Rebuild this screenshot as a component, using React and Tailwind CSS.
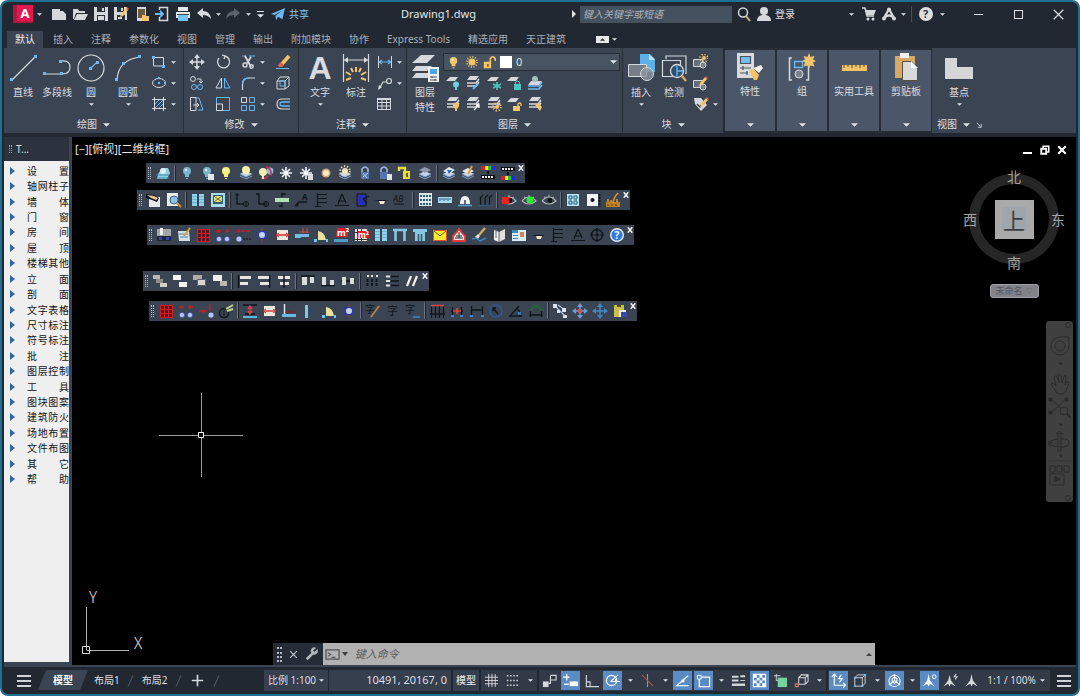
import { useState } from 'react'

const LIGHT = '#d5d8dc'
const BLUE = '#6cb8f0'
const GOLD = '#f4c46a'
const INK = '#10151b'

const L = ({ d, c = LIGHT, w = 1, f = 'none', dash }) => <path d={d} stroke={c} strokeWidth={w} fill={f} strokeDasharray={dash} />
const F = ({ d, c = LIGHT }) => <path d={d} fill={c} />
const Svg = ({ size = 16, box = 16, children }) => (
  <svg width={size} height={size} viewBox={`0 0 ${box} ${box}`} className="shrink-0" aria-hidden="true">
    {children}
  </svg>
)

const stack = (c = LIGHT) => (
  <>
    <F d="M5 1h9l-3 4H2z" c={c} />
    <L d="M2 8h9l3-4M2 11h9l3-4" c={c} w={1.6} />
  </>
)
const sheet = <F d="M5 2h8l-3 4H1z" />
const pencil = <><F d="M8 8l5-6 2 2-5 6-3 1z" c={GOLD} /><F d="M13 2l1-1 2 2-1 1z" c="#e5533d" /></>
const bulb = (c) => (
  <>
    <circle cx="8" cy="6" r="4" fill={c} />
    <F d="M6 9h4v3H6zM7 13h2v1H7z" c={c} />
    <circle cx="7" cy="5" r="1.3" fill="#fff" opacity=".7" />
  </>
)
const bulbSmall = (c) => <><circle cx="11" cy="9.5" r="3" fill={c} /><F d="M10 12h2v3h-2z" c={c} /></>
const sun = (x, y, r, c = GOLD) => (
  <>
    <circle cx={x} cy={y} r={r} fill={c} />
    <circle cx={x} cy={y} r={r + 1.8} fill="none" stroke={c} strokeWidth="2" strokeDasharray="1.2 1.8" />
  </>
)
const flake = (c) => <L d="M8 2v12M2 8h12M4 4l8 8M12 4l-8 8" c={c} w={1.6} />
const piles = (
  <>
    <F d="M2 9l6-3 6 3-6 3z" c="#c8d4e6" />
    <L d="M2 11l6 3 6-3M2 9l6 3 6-3" c="#7fa0c8" />
  </>
)
const twoBolts = (
  <>
    <circle cx="4" cy="12" r="2.6" fill="#b4c4ff" stroke="#3040a0" strokeWidth=".6" />
    <circle cx="12" cy="12" r="2.6" fill="#b4c4ff" stroke="#3040a0" strokeWidth=".6" />
  </>
)
const eye = (
  <>
    <L d="M1 9q7-8 14 0q-7 6-14 0M3 5l2 1M8 3v2M13 5l-2 1" c="#a9b4ac" w={1.2} />
    <circle cx="9" cy="8.5" r="2.4" fill={INK} />
  </>
)
const redGrid = <><F d="M2 2h12v12H2z" c="#5c1520" /><L d="M2 2.5h13M2 6.5h13M2 10.5h13M2 14.5h13M2.5 2v13M6.5 2v13M10.5 2v13M14.5 2v13" c="#d01c22" w={1.2} /></>
const columns = <><F d="M2 2h5v12H2zM9 2h5v12H9z" c="#8fd0ea" /><L d="M2 4.5h5M2 7.5h5M2 10.5h5M9 4.5h5M9 7.5h5M9 10.5h5" c="#6cb4d4" /></>
const fan = <><F d="M5 13V4q7 1 8 9z" c="#eadf9c" /><F d="M1 12h3v3H1zM13 12h2v3h-2z" c="#67c8f0" /></>
const pin = <><L d="M8 1v14" c="#8a3a50" w={1.2} /><F d="M3 4h10v8H3z" c="#303c98" /><circle cx="8" cy="8" r="3" fill="#c4d4ff" /></>
const paper = <><F d="M3 3h11v10H3z" c="#efe8dc" /><L d="M2 8h13" c="#d03030" w={1.4} /><L d="M5 6l-3 2 3 2M12 6l3 2-3 2" c="#d03030" /></>
const shelf = <L d="M3.5 1v14M3 2.5h10M3 6.5h10M3 10.5h10M1 14.5h6" c={INK} w={1.2} />
const basin = <><F d="M1 8h14l-3 1-1 3H7L6 9z" c={INK} /><F d="M6 9h6l-1 3H7z" c="#f3e6d0" /></>
const compass = <L d="M1 13.5h14M8 2l-4 10M8 2l4 9M4 9h8" c={INK} w={1.2} />
const cross4 = (c) => <><L d="M8 2v12M2 8h12" c={c} w={1.5} /><F d="M8 0l3 4H5zM8 16l3-4H5zM0 8l4-3v6zM16 8l-4-3v6z" c={c} /></>

const icons = {
  // 图层工具条
  layerMgr: <><F d="M3 9l4-6h6l2 5-3 6H2z" c="#8fd0e6" /><circle cx="8" cy="6" r="3" fill="#dfeef5" /><L d="M1 10h13M2 13h12" c="#4284a8" /></>,
  bulbOff: bulb('#78b4cc'),
  bulbOffPage: <>{bulb('#78b4cc')}<F d="M9 9h6v6H9z" c="#e4e6ea" /></>,
  bulbOn: bulb('#f8f07c'),
  bulbLayers: <>{piles}<circle cx="8" cy="5" r="4" fill="#fbf3a8" /></>,
  bulbSwap: <><circle cx="5" cy="7" r="4" fill="#f5efb0" /><circle cx="12" cy="6" r="3.4" fill="#8cc1d8" /><L d="M8 2q6 1 5 9M3 13q4 2 7-2" c="#c8305c" w={1.6} /><F d="M4 10h2v4H4z" c="#f5efb0" /></>,
  flake: flake('#f4f6f8'),
  flakePage: <>{flake('#f4f6f8')}<F d="M10 9h5v6h-5z" c="#d8dce2" /></>,
  sunDot: <><circle cx="8" cy="8" r="4.5" fill="#c9a27c" /><circle cx="8" cy="8" r="3" fill="#fde9c4" /></>,
  sunLayers: <>{piles}{sun(8, 6, 3, '#f2e3ba')}</>,
  lock: <><L d="M5 7V4q3-4 6 0v3" c="#9fb6e0" w={1.6} /><F d="M4 7h8v7H4z" c="#5575b0" /><L d="M6 8l4 5M6 12l5-4" c="#b8cdf5" /></>,
  lockPage: <><L d="M4 7V4q3-4 6 0v3" c="#9fb6e0" w={1.6} /><F d="M3 7h8v7H3z" c="#5575b0" /><F d="M10 9h5v6h-5z" c="#dfe3ea" /></>,
  unlock: <><L d="M2 6V3h6v5" c="#e8dc40" w={2.4} /><F d="M6 6h7v8H6z" c="#e8dc40" /><F d="M9 8h2v4H9z" c="#6a6420" /></>,
  stackGrey: <>{piles}<F d="M2 5l6-3 6 3-6 3z" c="#9198ac" /></>,
  stackBlue: <>{piles}<F d="M2 6l6-4 6 3-6 4z" c="#dce8f6" /><F d="M6 5h5l-3 4z" c="#2d6aa8" /></>,
  stackPen: <>{piles}<F d="M2 6l6-3 6 3-6 3z" c="#e4e8f0" /><L d="M12 1L8 9" c="#e8a030" w={2} /></>,
  rainbowTop: <><F d="M1 1h5v4H1z" c="#e81818" /><F d="M5 1h3v4H5z" c="#f8f020" /><F d="M8 1h4v4H8z" c="#20c830" /><F d="M11 1h4v4h-4z" c="#2028e0" /><F d="M1 10h14v4H1zM7 6h2v3H7z" c="#0a0c10" /><L d="M2 12h12" c="#f0f0f0" w={2} dash="2 1" /></>,
  rainbowBottom: <><F d="M1 2h14v4H1zM7 7h2v3H7z" c="#0a0c10" /><L d="M2 4h12" c="#f0f0f0" w={2} dash="2 1" /><F d="M1 11h5v4H1z" c="#e81818" /><F d="M5 11h3v4H5z" c="#f8f020" /><F d="M8 11h4v4H8z" c="#20c830" /><F d="M11 11h4v4h-4z" c="#2028e0" /></>,
  // 常用
  hand: <><F d="M3 5h11v10H3z" c="#e8ebee" /><F d="M0 2l8 1 5 3-2 4-5-2-6-2z" c={INK} /><F d="M1 3l7 1 4 2-2 2-5-2z" c="#e8c49c" /></>,
  findPage: <><F d="M1 1h11v13H1z" c="#e8edf2" /><circle cx="8" cy="8" r="4" fill="#8fc0e4" stroke="#44688c" /><L d="M11 11l4 4" c="#d88a30" w={2} /></>,
  columns,
  frame: <><F d="M1 1h14v14H1z" c="#a6dcec" /><F d="M3 3h10v9H3z" c="#325c70" /><F d="M4 4h8v6H4z" c="#e2de7c" /><L d="M4 4l8 6M12 4l-8 6" c="#6b7440" /></>,
  axisA: <><L d="M3 1v11h7" c={INK} w={1.3} /><circle cx="12" cy="12" r="2.5" fill="none" stroke={INK} /><L d="M12 9v6M1 3h4" c={INK} /></>,
  axisB: <><L d="M2 2h3v10h6" c={INK} w={1.3} /><circle cx="12" cy="12" r="2.5" fill="none" stroke={INK} /><L d="M12 9v6" c={INK} /></>,
  wallEdit: <><F d="M1 6h14v4H1z" c="#b4e0b8" /><L d="M8 1v4M8 11v4M5 14h3M8 2h4" c={INK} w={1.3} /></>,
  noteA: <><L d="M1 14l4-4h8" c={INK} w={1.4} /><circle cx="3" cy="13" r="1.5" fill={INK} /><text x="8" y="8" fontSize="8" fontWeight="bold" fill={INK}>A</text></>,
  shelf,
  compass,
  door: <><L d="M3 2h9v12H3z" c={INK} /><F d="M4 3h7v10H4z" c="#2a2fb8" /><L d="M9 7l6-3M9 7l4 4" c={INK} w={1.3} /></>,
  basin,
  textAB: <><text x="0" y="10" fontSize="9" fontStyle="italic" fill={INK}>AB</text><L d="M1 12h10" c={INK} /></>,
  dotGrid: <><F d="M2 1h13v13H2z" c="#dfe8ec" /><L d="M3 4h11M3 8h11M3 12h11" c="#31596e" w={2} dash="2 1" /></>,
  ruler: <><F d="M1 5h14v6H1z" c="#a6dcf0" /><L d="M3 6v3M5 6v2M7 6v3M9 6v2M11 6v3M13 6v2" c="#285a78" /></>,
  dome: <><F d="M3 12q0-8 5-8t5 8z" c="#eef2f4" /><F d="M7 8h2v4H7z" c="#606a74" /><L d="M1 13.5h14" c="#5aa6d0" w={1.4} /></>,
  posts: <><L d="M3.5 6v7M8 6v7M12.5 6v7M3 6l3-3M8 6l3-3M12 6l3-3" c={INK} w={1.2} /><L d="M1 13.5h14" c="#2c5a74" w={1.4} /></>,
  eyeRed: <>{eye}<F d="M1 5h7v7H1z" c="#f02020" /></>,
  eyeGreen: <>{eye}<circle cx="9" cy="8" r="3.6" fill="#28e838" /></>,
  eye,
  windowGrid: <><F d="M2 2h12v12H2z" c="#b4e4f6" /><L d="M4 4h3v3H4zM9 4h3v3H9zM4 9h3v3H4zM9 9h3v3H9z" c="#24586e" /></>,
  boxDot: <><F d="M2 2h11v12H2z" c="#f1f4f6" /><circle cx="7.5" cy="8" r="2" fill={INK} /><L d="M14.5 2v13" c={INK} w={2} dash="2 1" /></>,
  grass: <><F d="M1 10h14v5H1z" c="#c08020" /><L d="M8 11q1-6 5-10M3 10V7M6 10V8M12 10V7" c="#d89830" w={1.6} /><L d="M3 14v-2M7 14v-2M11 14v-2" c="#5a3c10" /></>,
  // 天正
  plan: <><F d="M1 2h14v7H1z" c="#a2a6a8" /><F d="M4 1h3v7H4z" c="#eceef0" /><F d="M1 9h14v5H1z" c="#20262e" /><F d="M3 10h3v3H3zM10 10h3v3h-3z" c="#3044c8" /></>,
  notePen: <><F d="M2 4h11l1 10H3z" c="#cfe2ec" /><L d="M3 7h9M4 10h8" c="#5580a0" /><L d="M14 1L8 9" c="#d8a040" w={2} /></>,
  redGrid,
  bolts: <>{twoBolts}<L d="M1 4h5M10 4h5M4 2v4M12 2v4" c="#c02028" w={1.3} /></>,
  boltLine: <><circle cx="4" cy="12" r="2.6" fill="#b4c4ff" /><L d="M8 12h8" c={INK} dash="2 1" /><L d="M1 4h14M4 2v4" c="#c02028" w={1.3} dash="4 1" /></>,
  pin,
  paper,
  duct: <><F d="M1 7h14v3H8L6 11H1z" c="#74bce8" /><L d="M5 5h10M9 1v5M13 1v5" c="#c84a50" w={1.2} /></>,
  fan,
  m2: <><F d="M4 1h11v9H3z" c="#e02028" /><text x="4" y="9" fontSize="9" fontWeight="bold" fill="#fff">m²</text><F d="M1 12h14v3H1z" c="#4d9cc8" /></>,
  m2Table: <><F d="M2 2h12v12H2z" c="#ece4e4" /><L d="M2 5.5h12M2 12.5h12M4.5 2v12M8.5 2v12" c="#303030" /><F d="M5 4h11v7H4z" c="#e02028" /><text x="5" y="11" fontSize="8" fontWeight="bold" fill="#fff">m²</text></>,
  portal: <L d="M1 3h14M3.5 3v11M12.5 3v11" c="#86c8e4" w={2.6} />,
  portal2: <><F d="M1 2h14v3H1zM3 5h10v9H3z" c="#86c8e4" /><L d="M6.5 7v7M9.5 7v7" c="#3b5a70" w={1.6} /></>,
  envelope: <><F d="M1 3h14v11H1z" c="#f6e838" /><L d="M1.5 3.5h13v10h-13z" c="#e05030" /><L d="M2 4l6 5 6-5" c="#6e6a10" /></>,
  stamp: <><L d="M8 2l3 4 3 3v5H2V9l3-3z" c="#e83838" w={1.8} f="#e8dede" /><L d="M5 9h6M4 11h8M8 5v6" c="#303030" /></>,
  broom: <><L d="M14 1L8 8" c="#d8b060" w={2.2} /><F d="M7 7l2 2-2 3-3-2z" c="#e8e0d0" /><L d="M1 12l4-1 4 3 6-3" c="#3d86c8" w={1.4} /></>,
  book: <><F d="M3 3l5 2v10l-5-2z" c="#f3f3f0" /><F d="M14 2L8 5v10l6-3z" c="#dfe0de" /><L d="M8 5v10M5 2v9" c="#5b6270" /></>,
  report: <><F d="M1 3h14v11H1z" c="#d8eefa" /><F d="M1 3h6v3H1zM2 8h5v1H2zM2 11h5v1H2z" c="#3b8ac0" /><F d="M9 5h4v5H9z" c="#e0824a" /></>,
  wheel: <><circle cx="8" cy="8" r="5.5" fill="none" stroke={INK} strokeWidth="1.4" /><L d="M8 1v14M1 8h14" c={INK} w={1.2} /></>,
  help: <><circle cx="8" cy="8" r="7" fill="#e6eefa" /><circle cx="8" cy="8" r="5.6" fill="#2f78dc" /><text x="5.5" y="12" fontSize="10" fontWeight="bold" fill="#fff">?</text></>,
  // 排列
  order1: <><F d="M1 2h7v4H1z" c="#b8b8b0" /><F d="M4 6h7v4H4z" c="#8e8e88" /><F d="M8 10h7v4H8z" c="#d0d0c8" /></>,
  order2: <F d="M1 2h8v5H1zM7 9h8v5H7z" c="#f4f4f0" />,
  order3: <><F d="M1 2h9v5H1z" c="#aeaea6" /><F d="M5 6h9v7H5z" c="#d6d6ce" /><L d="M5.5 6.5h8v6h-8z" c="#595f68" /></>,
  order4: <><F d="M1 2h9v6H1z" c="#eeeeea" /><F d="M8 8h7v5H8z" c="#b9b9b0" /></>,
  alignL: <><L d="M2.5 2v13" c={INK} w={1.5} /><F d="M4 3h11v3H4zM4 9h8v3H4z" c="#e6e6e2" /></>,
  alignR: <><L d="M13.5 2v13" c={INK} w={1.5} /><F d="M2 3h11v3H2zM4 9h9v3H4z" c="#e6e6e2" /></>,
  alignC: <><F d="M2 3h12v3H2zM4 9h9v3H4z" c="#e6e6e2" /><L d="M8 2v13" c={INK} w={1.5} /></>,
  alignT: <><L d="M1 3h14" c={INK} w={1.5} /><F d="M2 4h5v8H2zM10 4h4v6h-4z" c="#d8ddd8" /></>,
  alignB: <><L d="M1 12.5h14" c={INK} w={1.5} /><F d="M2 4h4v8H2zM10 7h4v5h-4z" c="#d8ddd8" /></>,
  alignM: <><L d="M1 8h14" c={INK} w={1.5} /><F d="M2 4h4v8H2zM10 5h4v6h-4z" c="#d8ddd8" /></>,
  spreadH: <><L d="M3.5 6v8M8 6v8M12.5 6v8" c={INK} w={1.8} dash="3 1" /><L d="M3 3h2M7 3h2M12 3h2" c="#e6e6e2" w={2} /></>,
  spreadV: <><L d="M7 3.5h8M7 8h8M7 12.5h8" c={INK} w={1.6} /><L d="M2 3.5h4M2 8h4M2 12.5h4" c="#e6e6e2" w={2} /></>,
  slashes: <L d="M3 13l4-10M9 13l4-10" c="#f2f2f0" w={2.2} />,
  // 标注
  boltBranch: <><circle cx="13" cy="12" r="2.6" fill="#b4c4ff" /><L d="M1 8h8M12 1v7M5 6v4" c="#c02028" w={1.3} /></>,
  clockPen: <><circle cx="6" cy="10" r="4.5" fill="none" stroke={INK} strokeWidth="1.5" /><L d="M6 7v6" c={INK} /><L d="M8 6l7-4M9 8l6-2" c="#c4d890" w={2} /></>,
  stretch: <><L d="M1 2h14M3 11h10" c={INK} w={1.6} /><L d="M8 3v8M6 6l2-3 2 3M6 8l2 3 2-3" c="#d84048" w={1.4} /><F d="M1 13h14v2H1z" c="#58b8dc" /></>,
  beam: <><F d="M1 11h14v3H1z" c="#6cb8e4" /><L d="M3.5 1v10" c="#e8e8f0" w={1.4} /><L d="M5 9h9M8 7v3M11 7v3" c="#702838" w={1.3} /></>,
  mirror: <><F d="M4 2h3v13H4z" c="#7cc6e2" /><L d="M9 8h6M12 5L9 8l3 3" c="#1d4a70" w={1.2} /></>,
  charPen: <><text x="0" y="10" fontSize="10" fill={INK}>字</text><L d="M14 3L6 14" c="#b98048" w={1.8} /></>,
  charDim: <text x="2" y="12" fontSize="11" fill={INK}>字</text>,
  charLine: <><text x="0" y="10" fontSize="10" fill={INK}>字</text><L d="M8 14h7" c="#4886c0" w={1.5} /></>,
  dim3: <><L d="M2.5 3v12M6.5 3v12M10.5 3v12M14.5 3v12M1 11h15" c={INK} w={1.3} /><L d="M2 2.5h13" c="#e04848" w={1.6} /></>,
  dimRed: <><L d="M2 8h12M3.5 4v9M12.5 4v9" c={INK} w={1.3} /><L d="M4 8h8M8 5v6" c="#e04838" w={1.6} /><F d="M2 12h3v2H2zM11 12h3v2h-3z" c="#3a8ccc" /></>,
  dimH: <><L d="M2 7h12M2.5 3v10M13.5 3v10" c={INK} w={1.3} /><F d="M1 12h3v2H1zM12 12h3v2h-3z" c="#3a8ccc" /></>,
  dimRadius: <><circle cx="8" cy="8" r="6" fill="none" stroke="#2c5a94" strokeWidth="1.4" /><L d="M10 11L5 5M5 8V5h3" c={INK} w={1.5} /></>,
  dimAngle: <><L d="M1 13h13M2 13l9-10M8 5q5 3 4 8" c={INK} w={1.3} /><F d="M10 9h3v3h-3z" c="#2e78b8" /></>,
  dimArc: <><L d="M2 8q6-10 12 0" c="#206838" w={2} /><L d="M1 12h14M2.5 8v6M13.5 8v6" c={INK} w={1.3} /></>,
  nodes: <><L d="M2 2l12 12M6 2l7 5" c="#a8c4dc" w={1.4} /><F d="M1 1h4v4H1zM10 5h4v4h-4zM11 12h4v3h-4zM5 7h3v3H5z" c="#dbe4ec" /></>,
  moveRed: <>{cross4('#6d9fcc')}<F d="M6 6h4v4H6z" c="#d05060" /></>,
  moveBlue: cross4('#3f88c4'),
  clip: <><F d="M2 2h10v12H2z" c="#c9c04c" /><F d="M5 1h4v3H5z" c="#4c4a20" /><F d="M7 7h7v7H7z" c="#e6e8f4" /><F d="M9 9h6v5H9z" c="#3a46a8" /></>,
  // 快速访问
  new: <F d="M1 3h8v2h3l3 3v6H1z" />,
  open: <><F d="M1 3h5l1 2h6v2H4l-2 6H1z" /><F d="M5 8h11l-3 6H2z" /></>,
  save: <><F d="M1 1h14v14H1z" /><F d="M4 1h8v5H4zM4 9h8v6H4z" c="#2a323c" /><F d="M9 2h2v3H9zM5 10h6v4H5z" /></>,
  saveAs: <><F d="M1 1h13v13H1z" /><F d="M4 1h7v5H4zM4 9h8v6H4z" c="#2a323c" /><F d="M8 2h2v3H8zM5 11h4v2H5z" />{pencil}</>,
  openDevice: <><F d="M3 1h9v14H3z" /><F d="M4 3h7v9H4z" c="#6b5a3c" /><F d="M8 9h3l1 1h3v5H8z" c={GOLD} /></>,
  saveDevice: <><L d="M5.5 4V1.5h8v13h-8V11" w={1.5} /><L d="M1 8h7M6 5l3 3-3 3" c={BLUE} w={1.8} /></>,
  print: <><F d="M3 1h10v4H3zM1 6h14v6H1z" c="#e4e6e8" /><F d="M3 9h10v6H3z" c="#72c4f4" /><L d="M2 8.5h12" c="#3a434e" /></>,
  undo: <F d="M1 7l6-5v3q7 0 8 8-3-4-8-4v3z" />,
  redo: <F d="M15 7L9 2v3q-7 0-8 8 3-4 8-4v3z" c="#5a626c" />,
  send: <F d="M0 8L16 1l-3 13-5-3-2 4-1-5 8-6-9 5z" c={BLUE} />,
  search: <><circle cx="7" cy="6.5" r="4.5" fill="none" stroke={LIGHT} strokeWidth="1.5" /><L d="M10 10l4 5" c="#c9b48c" w={2} /></>,
  user: <><circle cx="8" cy="5" r="4" fill={LIGHT} /><F d="M1 15q0-5 5-6h4q5 1 5 6z" /></>,
  cart: <><L d="M1 2h3l2 8h7" w={1.5} /><F d="M4 4h11l-2 5H6z" /><circle cx="7" cy="13" r="1.5" fill={LIGHT} /><circle cx="12" cy="13" r="1.5" fill={LIGHT} /></>,
  autodesk: <><L d="M8 3L3 12M8 3l5 9M4 11q4-3 8 0" w={2.2} /><circle cx="8" cy="3.5" r="2" fill={LIGHT} /><circle cx="3" cy="12.5" r="2" fill={LIGHT} /><circle cx="13" cy="12.5" r="2" fill={LIGHT} /></>,
  helpRound: <><circle cx="8" cy="8" r="7" fill="#dcdee0" /><text x="5" y="12" fontSize="11" fontWeight="bold" fill="#2a323c">?</text></>,
  // 绘图 / 修改
  rect: <><L d="M2.5 3.5h10V12h-10z" /><F d="M1 2h3v3H1zM11 11h3v3h-3z" c={BLUE} /></>,
  ellipse: <><ellipse cx="8" cy="8" rx="6.5" ry="4.5" fill="none" stroke={LIGHT} /><F d="M7 7h2v2H7zM13 7h2v2h-2zM7 2h2v2H7z" c={BLUE} /></>,
  hatch: <><L d="M3.5 1v14M12.5 1v14M1 3.5h14M1 12.5h14" /><L d="M4 8l4-4M4 12l8-8M8 12l4-4" c={BLUE} /></>,
  move: <><L d="M8 2v12M2 8h12" w={1.5} /><F d="M8 0l3 4H5zM8 16l3-4H5zM0 8l4-3v6zM16 8l-4-3v6z" /></>,
  rotate: <><L d="M4 4a6 6 0 1 0 6-2" w={1.3} /><L d="M7 1l3 1-1 3" w={1.3} /></>,
  trim: <><L d="M2 2h4M9 2h6" c={BLUE} /><L d="M5 2l6 11M11 3L7 9" w={1.8} /><circle cx="5" cy="11" r="2" fill="none" stroke={LIGHT} strokeWidth="1.5" /><circle cx="11.5" cy="12.5" r="1.7" fill="none" stroke={LIGHT} strokeWidth="1.5" /></>,
  erase: <><L d="M1 14.5h13" c={BLUE} /><L d="M14 2L7 10" c={GOLD} w={3.6} /><F d="M6 8l3 3-2 2H4l-1-2z" c="#e8604c" /></>,
  copy: <><circle cx="4" cy="4" r="2.5" fill="none" stroke={LIGHT} /><L d="M8 4h4v4M10 6l2 2 2-2" /><circle cx="5" cy="12" r="2.5" fill="none" stroke={BLUE} /><circle cx="11" cy="12" r="2.5" fill="none" stroke={BLUE} /></>,
  flip: <><L d="M6.5 3v10H1z" /><L d="M9.5 3v10H15z" c={BLUE} /></>,
  fillet: <><L d="M2.5 15V9q0-6 7-6H15" w={1.2} /><L d="M2.5 9q0-6 7-6" c={BLUE} w={1.5} /></>,
  solid: <><L d="M2 6h8v8H2zM5 2h9v9l-4 3M2 6l3-4M10 6l4-4" /><L d="M5 6h5v5H5z" c={BLUE} /></>,
  stretchTool: <><L d="M1.5 1.5H7v13H1.5z" /><L d="M7 2h3l4 12H9" c={BLUE} /><L d="M4 9h6M8 7l2 2-2 2" /></>,
  scale: <><L d="M1.5 1.5h13v13h-13z" c={BLUE} /><L d="M1.5 8h6v6.5h-6z" /></>,
  array: <><L d="M1.5 1.5h5v5h-5z" /><L d="M9.5 1.5h5v5h-5zM1.5 9.5h5v5h-5zM9.5 9.5h5v5h-5z" c={BLUE} /></>,
  offset: <><L d="M15 3H7Q2 3 2 8t5 5h8" w={1.2} /><L d="M15 6H8Q5 6 5 8t3 2h7" c={BLUE} w={1.3} /></>,
  dimLinear: <><L d="M1.5 2v12M14.5 2v12" /><L d="M2 8h12M5 6L2 8l3 2M11 6l3 2-3 2" c={BLUE} w={1.2} /></>,
  leader: <><L d="M2 14L6 7h4" w={1.2} /><circle cx="12" cy="6" r="2.5" fill="none" stroke={LIGHT} strokeWidth="1.2" /><F d="M1 15l1-5 3 2z" /></>,
  table: <><L d="M1.5 2.5h13v11h-13zM1 6.5h14M1 10h14M6 2.5v11M10.5 2.5v11" /><L d="M1 3h14" w={2} /></>,
  // 图层按钮
  ly1: <>{sheet}{bulbSmall('#66cfe0')}</>,
  ly2: <>{stack()}<L d="M8 14l5-5" c={BLUE} w={2} /></>,
  ly3: <>{sheet}<L d="M11 7v8M7 9l8 4M15 9l-8 4" c="#4cc6bc" w={1.5} /></>,
  ly4: <>{sheet}<F d="M8 9h7v6H8z" c="#4cc6bc" /><L d="M9.5 9V7q2-2 4 0v2" c="#4cc6bc" /></>,
  ly5: <><F d="M4 6h11l-3 4H1z" /><L d="M1 11h11l3-4M1 14h11l3-4" c={BLUE} w={1.5} /><circle cx="8" cy="4" r="3" fill="#a9bac0" /></>,
  ly6: <>{stack()}{bulbSmall(GOLD)}</>,
  ly7: <>{stack()}<L d="M9 14l5-5M11 9h3v3" c="#fff" w={1.3} /></>,
  ly8: <>{stack()}{sun(11, 11, 2)}</>,
  ly9: <>{sheet}<F d="M7 10h7v5H7z" c={GOLD} /><L d="M12 10V8q2-2 3 0v2" c={GOLD} w={1.3} /></>,
  ly10: <>{stack()}<F d="M8 9l3-2 4 4-2 4z" c={GOLD} /></>,
  blk1: <><L d="M1.5 5.5h9v7h-9z" f="#646e7a" /><circle cx="11" cy="11" r="3" fill="#7b838e" stroke={LIGHT} />{sun(12, 4, 2)}</>,
  blk2: <><L d="M1.5 5.5h9v7h-9z" f="#646e7a" /><circle cx="11" cy="12" r="3" fill="#7b838e" stroke={LIGHT} />{pencil}</>,
  blk3: <><F d="M1 2h7l6 7-6 6-6-7z" /><L d="M4 8l3 3 4-5" c="#3b4453" w={1.5} />{pencil}</>,
  // 状态栏
  grid: <L d="M5 1v14M8.5 1v14M12 1v14M1 4.5h14M1 8h14M1 11.5h14" />,
  dots: <L d="M2 3h12M2 8h12M2 13h12" w={1.6} dash="1.6 1.8" />,
  infer: <><F d="M1 9h6v6H1z" /><L d="M7 11h2V3M9 2.5h6v5H9" w={1.2} /></>,
  dyn: <><L d="M4 1v7M0 4.5h7" w={1.3} c="#fff" /><F d="M7 9h9v5H7z" c="#fff" /><L d="M1 12h5" c="#fff" w={1.5} /></>,
  ortho: <L d="M2.5 2v12.5H16M2.5 9.5h4v5" w={1.2} />,
  polar: <><circle cx="7" cy="8" r="5.5" fill="none" stroke="#fff" strokeWidth="1.2" /><L d="M6 9h10M6 9l8-7M10 5q2 2 1 4" c="#fff" w={1.2} /></>,
  iso: <><L d="M8 1v14" c="#53b585" w={1.2} /><L d="M2 2l12 12" c="#a85450" w={1.2} /></>,
  otrack: <><L d="M14 3L2 13.5h13" c="#fff" w={1.3} /><F d="M7 7h3v3H7z" c="#fff" /></>,
  osnap: <><L d="M3.5 4.5h11v10h-11z" c="#fff" w={1.3} /><L d="M1.5 2.5h4v4h-4z" c="#fff" f="#5a8ac2" /></>,
  lwt: <><L d="M1 4h7M1 8h7M10 3.5h5" w={2} /><L d="M1 12.5h14" w={2.6} /><L d="M10 8h5" /></>,
  transparency: <><L d="M1.5 1.5h13v13h-13z" c="#fff" w={1.2} /><F d="M2 2h3v3H2zM8 2h3v3H8zM5 5h3v3H5zM11 5h3v3h-3zM2 8h3v3H2zM8 8h3v3H8zM5 11h3v3H5zM11 11h3v3h-3z" c="#fff" /></>,
  cycle: <><L d="M1 3h7M3.5 1v7h3" /><F d="M5 5h10v10H5z" c="#76d39b" /></>,
  osnap3d: <><L d="M5 5h7v7H5zM5 5l3-3h7v7l-3 3M12 5l3-3" w={1.1} /><L d="M1.5 11.5h3v3h-3z" c="#d87a5c" w={1.3} /></>,
  ducs: <><L d="M3.5 2v11H15M1 4l2.5-3L6 4M13 10.5l2.5 2.5-2.500 2.500" c="#fff" w={1.2} /><L d="M11 2L8 6h4l-3 4" c="#fff" w={1.2} /></>,
  filter: <><L d="M3 5h8v9H3zM3 5l3-3h8v9l-3 3M11 5l3-3" /><F d="M2 4h2v2H2zM2 13h2v2H2zM10 13h2v2h-2zM13 1h2v2h-2z" c={BLUE} /></>,
  gizmo: <><circle cx="8" cy="8.5" r="6" fill="none" stroke="#fff" strokeWidth="1.1" /><L d="M8 1v7l-6 5M8 8l6 5M5.5 6L8 4.5 10.5 6v3L8 11 5.5 9z" c="#fff" w={1.1} /></>,
  annoVis: <><F d="M7 1l1.500 7 5 6.500-5-3-1.500 3-1.500-3-5 3 5-6.500z" c="#fff" /><circle cx="13" cy="4" r="2" fill="none" stroke="#fff" /></>,
  annoAuto: <><F d="M7 2l1.500 6 5 6.500-5-3-1.500 3-1.500-3-5 3 5-6.500z" /><L d="M14 1l-2 3h3l-2 3" w={1.2} /></>,
  annoScale: <F d="M8 1l1.500 7 5 6.500-5-3-1.500 3-1.500-3-5 3 5-6.500z" />,
}

const bigIcons = {
  line: <><L d="M3 26L26 3" w={1.2} /><F d="M1 24h3v3H1zM25 1h3v3h-3z" c={BLUE} /></>,
  pline: <><L d="M1 20h18q8 0 8-7t-9-6" w={1.2} /><F d="M0 18h3v3H0zM17 18h3v3h-3zM16 6h3v3h-3z" c={BLUE} /></>,
  circle: <><circle cx="14" cy="14" r="13" fill="none" stroke={LIGHT} strokeWidth="1.2" /><L d="M14 14l5-5" c={BLUE} w={1.2} /><F d="M12 13h3v3h-3zM19 7h3v3h-3z" c={BLUE} /></>,
  arc: <><L d="M3 26Q4 6 26 3" w={1.2} /><F d="M1 24h3v3H1zM24 1h3v3h-3zM8 8h3v3H8z" c={BLUE} /></>,
  dim: <><L d="M1.5 0v28M26.5 0v28M2 6h24" w={1.2} /><F d="M2 6l4-3v6zM26 6l-4-3v6z" /><L d="M14 13v5M9 14l2 4M19 14l-2 4M4 18l5 3M24 18l-5 3M4 26l5-2M24 26l-5-2" c={GOLD} w={2} /></>,
  layers: <><F d="M10 1h14l-8 8H1zM7 12h14l-5 5H1l4-5zM7 19h10v5H1l4-5z" /><F d="M17 13h11v15H17z" c="#eef0f2" /><F d="M19 15h7v5h-7z" c="#4aa4ea" /><L d="M19 23h7M19 26h7M21 22v2M24 25v2" c="#4a5360" /></>,
  insert: <><F d="M13 0h10l5 5v13H13z" c="#5eb0ea" /><F d="M22 0l6 6h-6z" c="#c2e2fa" /><L d="M1.5 10.5h18v12h-18z" f="#767e89" /><circle cx="20" cy="20" r="6.5" fill="#8f97a0" fillOpacity=".8" stroke={LIGHT} /></>,
  detect: <><L d="M6 5V2h20v18M2.5 6.5h18v16h-18z" w={1.2} /><circle cx="17" cy="17" r="6.5" fill="#2c5274" stroke={LIGHT} strokeWidth="1.3" /><L d="M17 12v10M17 17h6" c={BLUE} w={1.3} /><L d="M22 22l4 5" c="#d8a860" w={2.4} /></>,
  props: <><F d="M1 0h17v25H1z" c="#d8dadc" /><F d="M4 3h11v8H4z" c="#77bdf0" /><L d="M4.5 3.5h10v7h-10zM4 15h11M4 20h8M7 13v4M11 18v4" c="#4a5360" w={1.2} /><F d="M13 18l4-3 6 7-2 5h-3z" c={GOLD} /><F d="M17 15l3-1 5-2 2 3-4 5z" c="#eef0f2" /></>,
  group: <><L d="M4 5H1.5v22H4M18 27h2.5V5H18" w={1.5} /><L d="M6.5 8.5h8v6h-8z" c={BLUE} w={1.3} /><circle cx="11" cy="21" r="4" fill="#7b8490" stroke={LIGHT} /><F d="M21 0l1.5 4 4-1-1.5 3.5 3 1.5-3 1.5 1.5 4-4-1-1.5 3-1.5-3-4 1 1.5-4-3-1.5 3-1.5L15.5 3l4 1z" c={GOLD} /></>,
  ruler: <><F d="M2 12h25v6H2z" c={GOLD} /><L d="M4 12v3M8 12v2M12 12v3M16 12v2M20 12v3M24 12v2" c="#5c4a20" /></>,
  clipboard: <><F d="M3 3h20v22H3z" c="#d8a868" /><F d="M8 0h9v5H8z" c="#eef0f2" /><L d="M10.5 8.5h9l6 6v13h-15z" c="#5a5040" f="#d8dadc" /><F d="M19 8v7h7z" c="#fff" /></>,
  base: <F d="M0 4h12v9h16v12H0z" c="#d4d6d8" />,
}

const draw = [['直线', 'line'], ['多段线', 'pline'], ['圆', 'circle', true], ['圆弧', 'arc', true]]
const fileTools = ['new', 'open', 'save', 'saveAs', 'openDevice', 'saveDevice', 'print', 'undo']
const tabs = ['默认', '插入', '注释', '参数化', '视图', '管理', '输出', '附加模块', '协作', 'Express Tools', '精选应用', '天正建筑']
const collapsed = [['特性', 'props'], ['组', 'group'], ['实用工具', 'ruler'], ['剪贴板', 'clipboard']]
const menu = ['设置', '轴网柱子', '墙体', '门窗', '房间', '屋顶', '楼梯其他', '立面', '剖面', '文字表格', '尺寸标注', '符号标注', '批注', '图层控制', '工具', '图块图案', '建筑防火', '场地布置', '文件布图', '其它', '帮助']

// '|' 为分隔线
const toolbars = [
  { id: 'layer', place: 'left-[74px] top-[26px] w-[379px]', items: 'layerMgr | bulbOff bulbOffPage bulbOn bulbLayers bulbSwap flake flakePage sunDot sunLayers lock lockPage unlock stackGrey | stackBlue stackPen rainbowTop rainbowBottom' },
  { id: 'common', place: 'left-[65px] top-[53px] w-[493px]', items: 'hand findPage | columns frame | axisA axisB wallEdit noteA shelf compass door basin textAB | dotGrid ruler dome posts | eyeRed eyeGreen eye | windowGrid boxDot grass' },
  { id: 'arch', place: 'left-[75px] top-[88px] w-[487px]', items: 'plan notePen redGrid bolts boltLine pin paper duct fan m2 m2Table columns portal portal2 envelope stamp broom book report basin shelf compass wheel help' },
  { id: 'arrange', place: 'left-[71px] top-[134px] w-[286px]', items: 'order1 order2 order3 order4 | alignL alignR alignC | alignT alignB alignM | spreadH spreadV slashes' },
  { id: 'dimension', place: 'left-[77px] top-[164px] w-[488px]', items: 'redGrid bolts boltBranch clockPen | stretch paper beam mirror fan pin | charPen charDim charLine | dim3 dimRed dimH dimRadius dimAngle dimArc | nodes moveRed moveBlue clip' },
]

// '*' 开启, 'v' 下拉, '|' 间隔
const statusItems = 'grid dots v | infer *dyn ortho *polar v iso v *otrack *osnap v lwt *transparency cycle osnap3d v | *ducs filter v *gizmo v *annoVis annoAuto annoScale'

function Caret({ big }) {
  return (
    <svg width={big ? 7 : 5} height={big ? 4 : 3} viewBox="0 0 6 3" className="shrink-0" aria-hidden="true">
      <path d="M0 0h6L3 3z" fill="#dfe1e4" />
    </svg>
  )
}

function IconButton({ name, caret, className = 'w-5' }) {
  return (
    <button aria-label={name} className={`flex h-5 items-center justify-center gap-1 ${className}`}>
      <Svg>{icons[name]}</Svg>
      {caret && <Caret />}
    </button>
  )
}

function CaretButton({ className = 'h-5 w-2' }) {
  return (
    <button aria-label="展开" className={`flex shrink-0 items-center justify-center ${className}`}>
      <Caret />
    </button>
  )
}

function BigButton({ label, icon, caret, className = 'w-[34px]' }) {
  return (
    <button className={`flex shrink-0 flex-col items-center whitespace-pre-line pt-[6px] leading-[15px] ${className}`}>
      <Svg size={28} box={28}>{bigIcons[icon]}</Svg>
      <span className="mt-[3px]">{label}</span>
      {caret && <span className="mt-[3px]"><Caret /></span>}
    </button>
  )
}

function Panel({ title, className, children }) {
  return (
    <section className={`flex shrink-0 flex-col border-r border-[#262d37] ${className}`}>
      <div className="flex flex-1">{children}</div>
      <button className="flex h-[17px] items-center justify-center gap-[6px]">
        {title} <Caret big />
      </button>
    </section>
  )
}

const Rows = ({ className = '', children }) => <div className={`mt-1 flex flex-col gap-px ${className}`}>{children}</div>

function TitleBar() {
  return (
    <header className="flex h-6 shrink-0 items-center pl-[11px]">
      <button aria-label="应用程序菜单" className="h-[18px] w-5 border-l-4 border-b-2 border-[#b3163f] bg-[#e4174f] text-[13px] font-bold leading-4 text-white">A</button>
      <CaretButton className="h-5 w-3" />
      <div className="ml-1 flex w-[165px]">
        {fileTools.map(t => <IconButton key={t} name={t} className="flex-1" />)}
      </div>
      <CaretButton />
      <IconButton name="redo" className="w-[22px]" />
      <CaretButton />
      <button aria-label="自定义快速访问" className="flex w-4 flex-col items-center gap-[2px]">
        <span className="h-px w-[7px] bg-[#dfe1e4]" />
        <Caret big />
      </button>
      <button className="flex items-center gap-1 pl-[3px] text-[#86c5f2]">
        <Svg size={14}>{icons.send}</Svg>共享
      </button>
      <h1 className="flex-1 text-center text-[11px] text-[#e4e6e8]">Drawing1.dwg</h1>
      <button aria-label="收起搜索" className="flex w-3 justify-center">
        <svg width="4" height="8" viewBox="0 0 4 8" aria-hidden="true"><path d="M0 0l4 4-4 4z" fill="#dfe1e4" /></svg>
      </button>
      <input aria-label="搜索" placeholder="键入关键字或短语" className="h-[17px] w-[152px] bg-[#465160] px-[3px] italic text-white placeholder:text-[#a9b0ba]" />
      <IconButton name="search" className="w-6" />
      <button className="flex items-center gap-[3px]"><Svg>{icons.user}</Svg>登录</button>
      <CaretButton className="ml-[52px] h-5 w-2" />
      <IconButton name="cart" className="ml-1 w-5" />
      <IconButton name="autodesk" />
      <CaretButton />
      <span className="mx-1 h-4 w-px bg-[#454e5a]" />
      <IconButton name="helpRound" />
      <CaretButton className="h-5 w-3" />
      <div className="ml-[10px] flex">
        <button aria-label="最小化" className="flex h-5 w-10 items-center justify-center"><span className="h-px w-[9px] bg-[#dfe1e4]" /></button>
        <button aria-label="最大化" className="flex h-5 w-10 items-center justify-center"><span className="size-[9px] border border-[#dfe1e4]" /></button>
        <button aria-label="关闭" className="flex h-5 w-10 items-center justify-center"><Svg size={11}><L d="M1 1l14 14M15 1L1 15" w={1.8} /></Svg></button>
      </div>
    </header>
  )
}

function RibbonTabs({ tab, setTab }) {
  return (
    <nav className="flex h-[22px] shrink-0 items-end gap-[2px] pl-[5px]">
      {tabs.map(t => (
        <button key={t} onClick={() => setTab(t)}
          className={`h-[17px] px-2 leading-[17px] ${tab === t ? 'bg-[#3b4453] text-[#f0f1f2]' : 'text-[#a9afb7]'}`}>
          {t}
        </button>
      ))}
      <button aria-label="最小化功能区" className="ml-5 flex h-[17px] items-center gap-[3px]">
        <span className="flex h-[7px] w-[13px] items-center justify-center bg-[#e6e8ea]">
          <svg width="5" height="3" viewBox="0 0 6 3" aria-hidden="true"><path d="M0 3h6L3 0z" fill="#2a323c" /></svg>
        </span>
        <Caret />
      </button>
    </nav>
  )
}

function Ribbon() {
  return (
    <div className="mx-[2px] flex h-[85px] shrink-0 overflow-hidden bg-[#3b4453]">
      <Panel title="绘图" className="w-[180px]">
        <div className="flex pl-[2px]">
          {draw.map(([label, icon, caret]) => (
            <BigButton key={label} label={label} icon={icon} caret={caret} className={icon === 'arc' ? 'w-[40px]' : 'w-[34px]'} />
          ))}
        </div>
        <Rows>
          {['rect', 'ellipse', 'hatch'].map(n => <IconButton key={n} name={n} caret className="w-[30px]" />)}
        </Rows>
      </Panel>

      <Panel title="修改" className="w-[115px]">
        <Rows className="ml-[3px]">{['move', 'copy', 'stretchTool'].map(n => <IconButton key={n} name={n} />)}</Rows>
        <Rows className="ml-[6px]">{['rotate', 'flip', 'scale'].map(n => <IconButton key={n} name={n} />)}</Rows>
        <Rows className="ml-1">{['trim', 'fillet', 'array'].map(n => <IconButton key={n} name={n} caret className="w-[30px]" />)}</Rows>
        <Rows className="ml-[6px]">{['erase', 'solid', 'offset'].map(n => <IconButton key={n} name={n} />)}</Rows>
      </Panel>

      <Panel title="注释" className="w-[108px]">
        <button className="ml-[3px] flex w-9 flex-col items-center pt-[7px] leading-[15px]">
          <span className="h-[26px] font-['Liberation_Sans'] text-[32px] font-bold leading-[26px] text-[#d8dadd]">A</span>
          <span className="mt-1">文字</span>
          <span className="mt-[3px]"><Caret /></span>
        </button>
        <BigButton label="标注" icon="dim" className="w-9" />
        <Rows className="ml-[2px]">
          <IconButton name="dimLinear" caret className="w-[26px]" />
          <IconButton name="leader" caret className="w-[26px]" />
          <IconButton name="table" className="w-4" />
        </Rows>
      </Panel>

      <Panel title="图层" className="w-[216px]">
        <BigButton label={'图层\n特性'} icon="layers" className="w-9" />
        <div className="flex flex-1 flex-col pr-[2px]">
          <div className="mt-[5px] flex h-[18px] items-center gap-1 border border-[#262d37] bg-[#495463] px-[2px]">
            <Svg size={15}>{bulb(GOLD)}</Svg>
            <Svg size={14}>{sun(8, 8, 4)}</Svg>
            <Svg size={13}><F d="M1 7h9v8H1z" c={GOLD} /><L d="M9 8V3q3-4 6 0v3" c={GOLD} w={2} /><F d="M5 10h2v3H5z" c="#6a5018" /></Svg>
            <span className="size-3 bg-white" />
            <select aria-label="当前图层" className="flex-1 appearance-none text-[11px] leading-4 text-[#dfe1e4]"><option>0</option></select>
            <Caret big />
          </div>
          <div className="mt-[2px] grid w-[102px] grid-cols-5 gap-y-px">
            {['ly1', 'ly2', 'ly3', 'ly4', 'ly5', 'ly6', 'ly7', 'ly8', 'ly9', 'ly10'].map(n => <IconButton key={n} name={n} />)}
          </div>
        </div>
      </Panel>

      <Panel title="块" className="w-[101px]">
        <BigButton label="插入" icon="insert" caret className="ml-px w-[34px]" />
        <BigButton label="检测" icon="detect" className="w-8" />
        <Rows>
          <IconButton name="blk1" />
          <IconButton name="blk2" />
          <IconButton name="blk3" caret className="w-[30px]" />
        </Rows>
      </Panel>

      <div className="flex gap-[2px] bg-[#262d37] px-px py-[2px]">
        {collapsed.map(([label, icon]) => (
          <button key={label} className="flex w-[50px] flex-col items-center bg-[#4b5768] pt-[3px]">
            <Svg size={28} box={28}>{bigIcons[icon]}</Svg>
            <span className="mt-[3px] leading-[15px]">{label}</span>
            <span className="mt-auto mb-1"><Caret big /></span>
          </button>
        ))}
      </div>

      <section className="flex flex-col pl-[5px]">
        <BigButton label="基点" icon="base" caret className="w-[44px] flex-1" />
        <button className="flex h-[17px] items-center gap-[6px]">
          视图 <Caret big /> <Svg size={6}><L d="M2 2l10 10M14 5v9H5" w={2.4} /></Svg>
        </button>
      </section>
    </div>
  )
}

function SideMenu() {
  return (
    <aside className="flex w-[68px] shrink-0 flex-col border-r-[3px] border-b-[3px] border-[#3b4453] bg-[#efefef] text-[#141414]">
      <div className="flex h-6 shrink-0 items-center gap-1 bg-[#2c333f] pl-[5px] text-[#dfe1e4]">
        <span className="h-2 w-[3px] border-x border-dotted border-[#9aa1ab]" />T...
      </div>
      <ul className="flex h-[326px] flex-col pt-[2px]">
        {menu.map(m => (
          <li key={m} className="flex flex-1 items-center">
            <button className="flex w-full items-center pl-[6px]">
              <svg width="5" height="8" viewBox="0 0 5 8" aria-hidden="true"><path d="M0 0l5 4-5 4z" fill="#2f6a9c" /></svg>
              <span className="ml-3 flex w-[42px] justify-between leading-[14px]">
                {[...m].map((ch, i) => <span key={i}>{ch}</span>)}
              </span>
            </button>
          </li>
        ))}
      </ul>
    </aside>
  )
}

function Toolbar({ bar }) {
  return (
    <div role="toolbar" aria-label={bar.id} className={`absolute flex h-5 items-center bg-[#3b4453] ${bar.place}`}>
      <span className="mx-[2px] h-3 w-[3px] border-x border-dotted border-[#b5bac2]" />
      {bar.items.split(' ').map((n, i) =>
        n === '|'
          ? <span key={i} className="mx-px h-4 w-[2px] border-l border-[#6a7483] bg-[#1f262f]" />
          : <button key={i} aria-label={n} className="flex flex-1 justify-center"><Svg>{icons[n]}</Svg></button>
      )}
      <button aria-label="关闭工具条" className="w-[7px] self-start pt-[2px]">
        <Svg size={6}><L d="M2 1l12 14M14 1L2 15" c="#fff" w={4} /></Svg>
      </button>
    </div>
  )
}

function ViewCube() {
  return (
    <div className="absolute right-[17px] top-[34px] flex w-[90px] flex-col items-center font-['Noto_Sans_CJK_SC'] text-[14px] leading-4 text-[#a3a3a3]">
      <div className="relative mt-[3px] flex size-[90px] items-center justify-center rounded-full border-[10px] border-[#262626]">
        <button className="flex size-[39px] shrink-0 items-center justify-center bg-[#a9a9a9]">
          <span className="flex size-6 items-center justify-center bg-[#a0a5ab] text-[22px] leading-6 text-[#3c4046]">上</span>
        </button>
        <span className="absolute -top-4">北</span>
        <span className="absolute -bottom-4">南</span>
        <span className="absolute -left-4">西</span>
        <span className="absolute -right-4">东</span>
      </div>
      <button className="mt-5 flex h-[14px] w-[49px] items-center justify-center gap-1 rounded-[3px] border border-[#a0a0a6] bg-[#82828a] text-[9px] leading-3 text-[#55555e]">
        未命名 <span className="text-[6px]">▽</span>
      </button>
    </div>
  )
}

function NavBar() {
  return (
    <div className="absolute right-[3px] top-[184px] flex h-[181px] w-[27px] flex-col items-center rounded-[3px] bg-[#404040]">
      <svg width="27" height="181" viewBox="0 0 27 181" fill="none" stroke="#2b2b2b" aria-hidden="true">
        <circle cx="22" cy="4" r="2.5" />
        <path d="M14 16h9v9a9 9 0 1 1-9-9z" />
        <circle cx="14" cy="25" r="5" />
        <path d="M13 42h3l-1 2zM13 103h3l-1 2zM13 134h3l-1 2z" fill="#2b2b2b" />
        <path d="M9 69l-4-6q1-2 3 0l2 2-2-9q2-2 3 0l2 6-1-8q2-2 3 0l1 8 2-7q2-1 2 1l-1 8 2-3q2-1 2 1l-3 8q-1 3-4 3h-3q-3 0-4-4z" />
        <path d="M5 78l15 14M20 78L5 92" />
        <path d="M3 77h3v3H3zM19 77h3v3h-3zM3 90h3v3H3z" fill="#2b2b2b" />
        <circle cx="18" cy="90" r="4" fill="#404040" />
        <path d="M21 93l4 4" strokeWidth="2" />
        <path d="M12 112v18h3v-18zM10 113l3-3 4 3" />
        <path d="M12 118q-8 1-8 4t9 4 10-4-8-4M4 126l-2-5 5 1" />
        <path d="M1 140h25" stroke="#353535" />
        <path d="M4 145h5v6H4zM11 145h5v6h-5zM18 145h5v6h-5zM4 153h14v11H4z" />
        <path d="M9 155l5 3-5 3z" fill="#2b2b2b" />
        <circle cx="22" cy="177" r="2.5" />
      </svg>
    </div>
  )
}

function Canvas() {
  return (
    <main className="relative flex-1 overflow-hidden bg-black">
      <p className="pl-[3px] pt-1 text-[11px] leading-[15px] text-[#e6e6e6]">[−][俯视][二维线框]</p>
      <div className="absolute right-[9px] top-2 flex gap-[7px]">
        <button aria-label="最小化视口" className="flex h-[10px] w-[10px] items-end"><span className="mb-px h-[2px] w-[9px] bg-white" /></button>
        <button aria-label="还原视口"><Svg size={10}><L d="M5 5V2h9v9h-3" c="#fff" w={2.4} /><L d="M2 6h8v8H2z" c="#fff" w={3} /></Svg></button>
        <button aria-label="关闭视口"><Svg size={10}><L d="M2 2l12 12M14 2L2 14" c="#fff" w={3.4} /></Svg></button>
      </div>

      {toolbars.map(b => <Toolbar key={b.id} bar={b} />)}

      {/* 十字光标 */}
      <svg width="84" height="84" className="absolute left-[87px] top-[256px]" aria-hidden="true">
        <path d="M0 42.5h39M45 42.5h39M42.5 0v39M42.5 45v39" stroke="#9a9a9a" />
        <path d="M39.5 39.5h5v5h-5z" stroke="#fff" fill="none" />
      </svg>

      {/* UCS 图标 */}
      <svg width="76" height="84" className="absolute bottom-[3px] left-[9px]" aria-hidden="true">
        <path d="M5.5 29v43M10 72.5h38M5.5 72.5h5" stroke="#b4b4b4" fill="none" />
        <path d="M1.5 68.500h7v7h-7z" stroke="#dcdcdc" fill="none" />
        <text x="12" y="25" textAnchor="middle" fontSize="16" fill="#e0e0e0" fontFamily="Noto Sans CJK SC" fontWeight="300">Y</text>
        <text x="57" y="71" textAnchor="middle" fontSize="16" fill="#e0e0e0" fontFamily="Noto Sans CJK SC" fontWeight="300">X</text>
      </svg>

      <ViewCube />
      <NavBar />

      {/* 命令行 */}
      <div className="absolute bottom-0 left-1/5 right-1/5 flex h-[22px] items-center bg-[#b1b1b1]">
        <div className="flex h-full w-[50px] items-center gap-[7px] bg-[#252c37] pl-1">
          <span className="flex">
            <span className="h-[15px] border-l-2 border-dotted border-[#b5bac2]" />
            <span className="ml-px h-[15px] border-l-2 border-dotted border-[#b5bac2]" />
          </span>
          <button aria-label="关闭命令行"><Svg size={9}><L d="M2 2l12 12M14 2L2 14" w={2} c="#c4c7cb" /></Svg></button>
          <button aria-label="自定义命令行">
            <Svg size={14}><L d="M2 14l7-7" w={3} c="#b4b8bd" /><L d="M14 3l-3 3-2-2 3-3q-5-1-5 4 1 4 5 3 3-1 2-5z" c="#b4b8bd" f="#b4b8bd" /></Svg>
          </button>
        </div>
        <button aria-label="最近使用的命令" className="flex w-7 items-center justify-center gap-[2px]">
          <Svg size={15}><L d="M1 3h14v10H1z" c="#555" w={1.3} /><L d="M3 6l3 2-3 2M7 11h4" c="#555" w={1.2} /></Svg>
          <svg width="6" height="4" viewBox="0 0 6 4" aria-hidden="true"><path d="M0 0h6L3 4z" fill="#3e3e3e" /></svg>
        </button>
        <input aria-label="命令" placeholder="键入命令" className="min-w-0 flex-1 px-1 text-[11px] italic text-black placeholder:text-[#5c5c5c]" />
        <button aria-label="命令历史" className="flex w-3 justify-center">
          <svg width="6" height="3" viewBox="0 0 6 3" aria-hidden="true"><path d="M0 3h6L3 0z" fill="#3e3e3e" /></svg>
        </button>
      </div>
    </main>
  )
}

function Burger({ label }) {
  return (
    <button aria-label={label} className="flex w-5 flex-col items-center gap-[3px]">
      <span className="h-[2px] w-[14px] bg-[#d0d3d7]" />
      <span className="h-[2px] w-[14px] bg-[#d0d3d7]" />
      <span className="h-[2px] w-[14px] bg-[#d0d3d7]" />
    </button>
  )
}

const Slash = () => <span className="h-3 w-px rotate-[25deg] bg-[#4f5966]" />

function StatusBar() {
  return (
    <footer className="mx-[2px] flex h-[29px] shrink-0 items-center border-t-2 border-[#3b4453]">
      <div className="flex flex-1 items-center self-stretch pl-[10px]">
        <Burger label="菜单" />
        <button className="relative ml-2 mb-1 flex h-5 w-[42px] items-center justify-center self-end font-semibold text-white">
          <span className="absolute inset-0 -skew-x-[22deg] bg-[#3b4453]" />
          <span className="relative">模型</span>
        </button>
        <button className="mx-[10px]">布局1</button>
        <Slash />
        <button className="mx-[11px]">布局2</button>
        <Slash />
        <button aria-label="新建布局" className="mx-3"><Svg size={13}><L d="M8 1v14M1 8h14" w={2} /></Svg></button>
        <Slash />
      </div>

      <div className="flex h-[21px] items-center">
        <button className="flex h-full w-16 items-center justify-center gap-[3px] whitespace-nowrap bg-[#363f4d]">比例 1:100 <Caret /></button>
        <span className="ml-px flex h-full w-[122px] items-center justify-end bg-[#363f4d] pr-1 text-[11px]">10491, 20167, 0</span>
        <button className="mx-[2px] h-full w-[26px] bg-[#363f4d] font-medium">模型</button>
        {statusItems.split(' ').map((s, i) => {
          if (s === '|') return <span key={i} className="w-[2px]" />
          if (s === 'v') return <CaretButton key={i} className="h-full w-[14px] bg-[#323a47]" />
          const on = s[0] === '*'
          const name = on ? s.slice(1) : s
          return (
            <button key={i} aria-label={name} aria-pressed={on} className="flex h-full w-[21px] items-center justify-center bg-[#323a47]">
              <span className={`flex size-[19px] items-center justify-center ${on ? 'bg-[#5b8bc3]' : ''}`}>
                <Svg size={15}>{icons[name]}</Svg>
              </span>
            </button>
          )
        })}
        <button className="flex h-full w-[68px] items-center justify-center gap-1 whitespace-nowrap bg-[#323a47]">1:1 / 100% <Caret /></button>
        <span className="ml-1 mr-[2px]"><Burger label="自定义" /></span>
      </div>
    </footer>
  )
}

export default function App() {
  const [tab, setTab] = useState('默认')

  return (
    <div className="flex h-screen flex-col overflow-hidden rounded-lg border-2 border-[#1f6f93] bg-[#212831] font-['Noto_Sans','Noto_Sans_CJK_SC',sans-serif] text-[10px] text-[#dcdee1]">
      <TitleBar />
      <RibbonTabs tab={tab} setTab={setTab} />
      <Ribbon />
      <div className="mx-[2px] mt-1 flex min-h-0 flex-1">
        <SideMenu />
        <Canvas />
      </div>
      <StatusBar />
    </div>
  )
}
